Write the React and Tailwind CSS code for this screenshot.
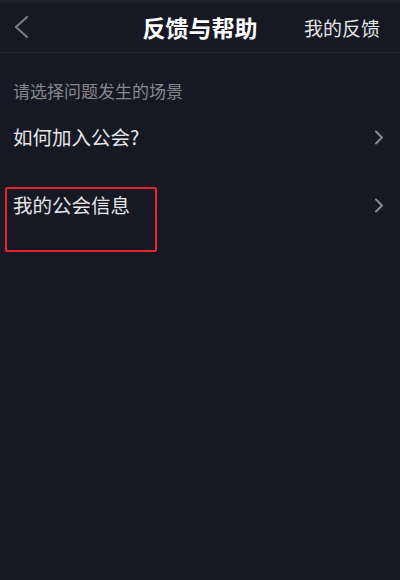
import React from "react";

const font = { fontFamily: '"Noto Sans CJK SC", "Noto Sans", sans-serif' };

function Chevron() {
  return (
    <svg width="10" height="15" viewBox="0 0 10 15" fill="none" className="shrink-0">
      <polyline points="2,1.5 8,7.5 2,13.5" stroke="#8b8c92" strokeWidth="2" strokeLinecap="round" strokeLinejoin="round" />
    </svg>
  );
}

export default function App() {
  const items = ["如何加入公会?", "我的公会信息"];

  return (
    <div className="w-[400px] h-[580px] bg-[#161823] flex flex-col overflow-hidden" style={font}>
      {/* Header */}
      <div className="h-[53px] border-t-2 border-t-[#1c1e29] border-b border-b-[#23252f] flex items-center relative shrink-0">
        <div className="pl-[13px] w-[100px]">
          <svg width="17" height="24" viewBox="0 0 17 24" fill="none">
            <polyline points="14,2 3,12 14,22" stroke="#7a7b82" strokeWidth="2.2" strokeLinecap="round" strokeLinejoin="round" />
          </svg>
        </div>
        <div className="flex-1 text-center text-white text-[23px] font-bold leading-none">反馈与帮助</div>
        <div className="w-[100px] pr-[20px] text-right text-[#e4e4e7] text-[19px] leading-none whitespace-nowrap">我的反馈</div>
      </div>

      {/* Subtitle */}
      <div className="pt-[26px] px-[13px] text-[17px] leading-6 text-[#86878d]">请选择问题发生的场景</div>

      {/* Rows */}
      <div className="flex flex-col">
        {items.map((item, i) => (
          <div key={item} className="relative h-[68px] flex items-center justify-between pl-[13px] pr-[16px]">
            <span className="text-[19.5px] text-[#e6e6e9] leading-none">{item}</span>
            <Chevron />
            {i === 1 && (
              <div className="absolute left-[5px] top-[16px] w-[152px] h-[65px] border-2 border-[#e3262d] rounded-[2px]"></div>
            )}
          </div>
        ))}
      </div>
    </div>
  );
}
